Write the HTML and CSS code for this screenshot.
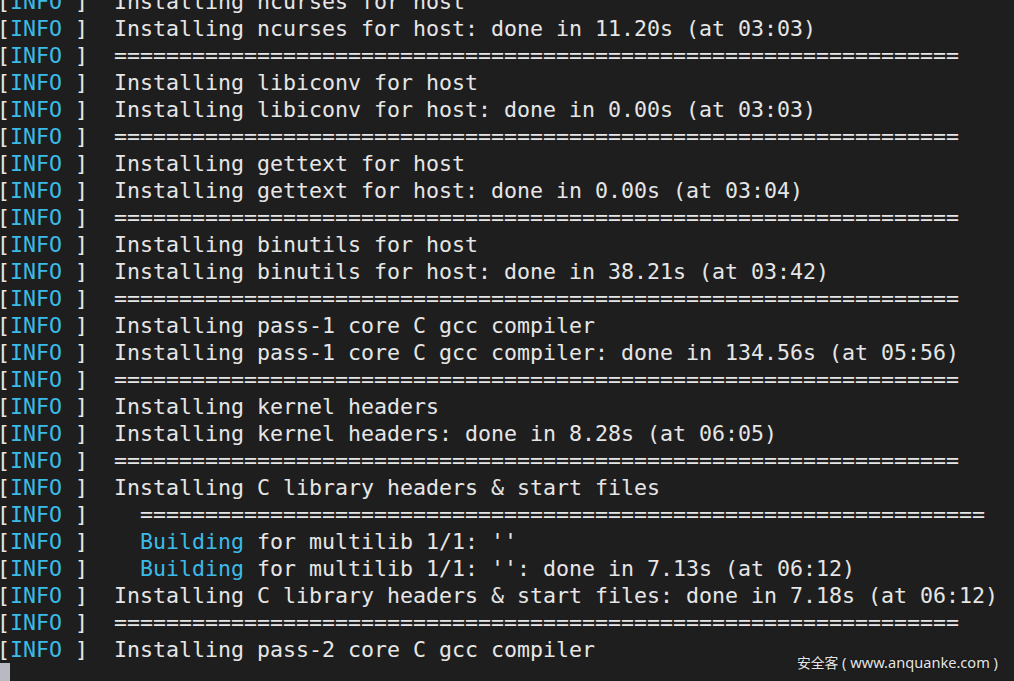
FILE: index.html
```html
<!DOCTYPE html>
<html lang="en">
<head>
<meta charset="utf-8">
<title>crosstool-ng build log</title>
<link rel="stylesheet" href="styles.css">
</head>
<body>
<main class="term">
<div class="line">[<span class="tag">INFO</span> ]  Installing ncurses for host</div>
<div class="line">[<span class="tag">INFO</span> ]  Installing ncurses for host: done in 11.20s (at 03:03)</div>
<div class="line">[<span class="tag">INFO</span> ]  =================================================================</div>
<div class="line">[<span class="tag">INFO</span> ]  Installing libiconv for host</div>
<div class="line">[<span class="tag">INFO</span> ]  Installing libiconv for host: done in 0.00s (at 03:03)</div>
<div class="line">[<span class="tag">INFO</span> ]  =================================================================</div>
<div class="line">[<span class="tag">INFO</span> ]  Installing gettext for host</div>
<div class="line">[<span class="tag">INFO</span> ]  Installing gettext for host: done in 0.00s (at 03:04)</div>
<div class="line">[<span class="tag">INFO</span> ]  =================================================================</div>
<div class="line">[<span class="tag">INFO</span> ]  Installing binutils for host</div>
<div class="line">[<span class="tag">INFO</span> ]  Installing binutils for host: done in 38.21s (at 03:42)</div>
<div class="line">[<span class="tag">INFO</span> ]  =================================================================</div>
<div class="line">[<span class="tag">INFO</span> ]  Installing pass-1 core C gcc compiler</div>
<div class="line">[<span class="tag">INFO</span> ]  Installing pass-1 core C gcc compiler: done in 134.56s (at 05:56)</div>
<div class="line">[<span class="tag">INFO</span> ]  =================================================================</div>
<div class="line">[<span class="tag">INFO</span> ]  Installing kernel headers</div>
<div class="line">[<span class="tag">INFO</span> ]  Installing kernel headers: done in 8.28s (at 06:05)</div>
<div class="line">[<span class="tag">INFO</span> ]  =================================================================</div>
<div class="line">[<span class="tag">INFO</span> ]  Installing C library headers &amp; start files</div>
<div class="line">[<span class="tag">INFO</span> ]    =================================================================</div>
<div class="line">[<span class="tag">INFO</span> ]    <span class="tag">Building</span> for multilib 1/1: ''</div>
<div class="line">[<span class="tag">INFO</span> ]    <span class="tag">Building</span> for multilib 1/1: '': done in 7.13s (at 06:12)</div>
<div class="line">[<span class="tag">INFO</span> ]  Installing C library headers &amp; start files: done in 7.18s (at 06:12)</div>
<div class="line">[<span class="tag">INFO</span> ]  =================================================================</div>
<div class="line">[<span class="tag">INFO</span> ]  Installing pass-2 core C gcc compiler</div>
<div class="line"><span class="cursor"> </span></div>
</main>
<div class="watermark"><span class="cjk">安全客</span> ( www.anquanke.com )</div>
</body>
</html>
```

FILE: styles.css
```css
html, body {
  margin: 0;
  padding: 0;
  background: #1e1e1e;
  height: 681px;
  overflow: hidden;
}

.term {
  margin: -12px 0 0 -3px;
  font-family: "DejaVu Sans Mono", "Liberation Mono", monospace;
  font-size: 21.6px;
  line-height: 27px;
  color: #e6e6e6;
  display: flex;
  flex-direction: column;
}

.line {
  white-space: pre;
  height: 27px;
}

.tag {
  color: #3bbbe8;
}

.cursor {
  display: inline-block;
  width: 12.5px;
  height: 27px;
  vertical-align: top;
  background: #b9b9c2;
}

.watermark {
  position: absolute;
  right: 16px;
  bottom: 9px;
  font-family: "Noto Sans", "Noto Sans CJK SC", sans-serif;
  font-size: 14.6px;
  line-height: 20px;
  color: #e4e4e4;
  white-space: pre;
  text-shadow: 0 0 2px rgba(0, 0, 0, 0.6);
}

.cjk {
  font-family: "Noto Sans CJK SC", sans-serif;
  font-size: 13.8px;
}
```
